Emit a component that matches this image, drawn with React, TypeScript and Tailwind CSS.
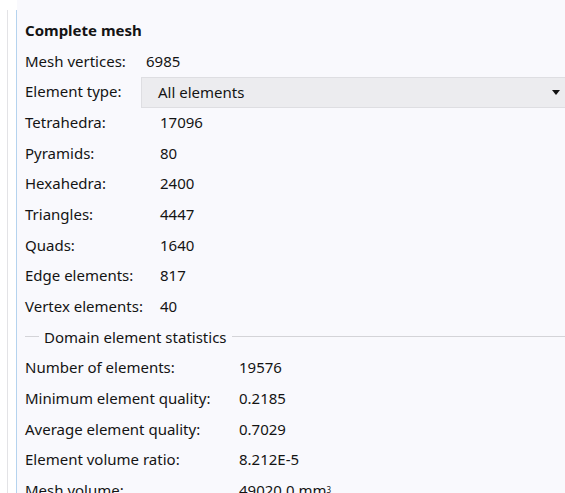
import React from "react";

const meshCounts: [string, string][] = [
  ["Tetrahedra:", "17096"],
  ["Pyramids:", "80"],
  ["Hexahedra:", "2400"],
  ["Triangles:", "4447"],
  ["Quads:", "1640"],
  ["Edge elements:", "817"],
  ["Vertex elements:", "40"],
];

const domainStats: [string, React.ReactNode][] = [
  ["Number of elements:", "19576"],
  ["Minimum element quality:", "0.2185"],
  ["Average element quality:", "0.7029"],
  ["Element volume ratio:", "8.212E-5"],
  [
    "Mesh volume:",
    <>
      49020.0 mm<sup className="text-[8px] relative -top-[3px]">3</sup>
    </>,
  ],
];

function Row({ label, value, valueX }: { label: string; value: React.ReactNode; valueX: string }) {
  return (
    <div className="flex h-[30.67px] items-center">
      <span className={valueX}>{label}</span>
      <span>{value}</span>
    </div>
  );
}

export default function App() {
  return (
    <div
      className="flex h-[493px] w-[565px] overflow-hidden bg-white text-[15px] text-[#141414]"
      style={{ fontFamily: "'Noto Sans', 'Open Sans', sans-serif" }}
    >
      {/* left gutter with the splitter lines */}
      <div className="flex w-[16px] shrink-0 pt-[10px]">
        <div className="ml-[7px] w-px bg-[#e3e3e6]" />
      </div>
      <div className="mt-[10px] w-px shrink-0 bg-[#b5d3ee]" />

      <div className="flex-1 bg-[#f9f9fd] pl-[8px] pt-[15px]">
        <div className="flex h-[30.67px] items-center font-bold">Complete mesh</div>
        <Row label="Mesh vertices:" value="6985" valueX="w-[121px]" />

        <div className="flex h-[30.67px] items-center">
          <span className="w-[116px]">Element type:</span>
          <div className="-mr-[10px] mt-[2px] flex h-[31px] flex-1 items-center justify-between border border-[#dedee2] bg-[#ececef] pl-[16px] pr-[14px]">
            <span>All elements</span>
            <svg width="8" height="5" viewBox="0 0 8 5">
              <path d="M0 0h8L4 5z" fill="#111" />
            </svg>
          </div>
        </div>

        {meshCounts.map(([l, v]) => (
          <Row key={l} label={l} value={v} valueX="w-[135px]" />
        ))}

        <div className="flex h-[30.67px] items-center">
          <div className="h-px w-[14px] bg-[#d4d4d8]" />
          <span className="px-[5px]">Domain element statistics</span>
          <div className="h-px flex-1 bg-[#d4d4d8]" />
        </div>

        {domainStats.map(([l, v]) => (
          <Row key={l} label={l} value={v} valueX="w-[214px]" />
        ))}
      </div>
    </div>
  );
}
